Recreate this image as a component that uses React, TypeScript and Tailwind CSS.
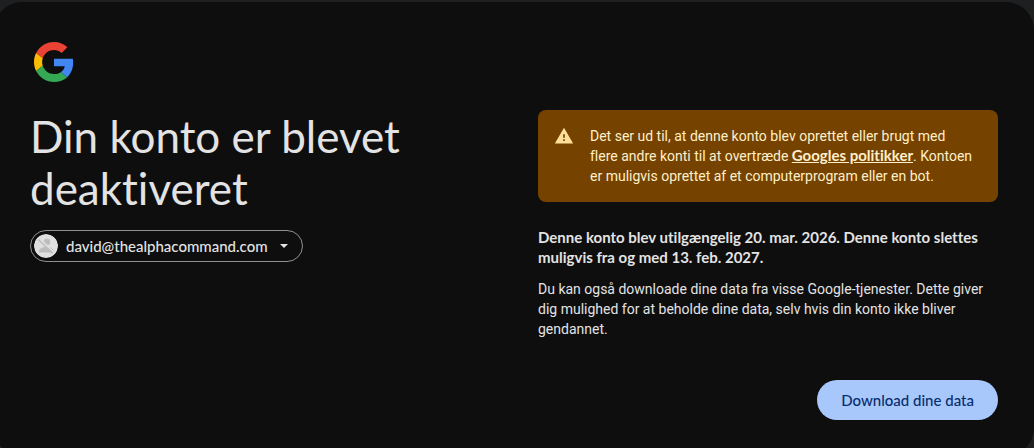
const GoogleLogo = () => (
  <svg viewBox="0 0 48 48" className="m-1 size-10" role="img" aria-label="Google">
    <path fill="#EA4335" d="M24 9.5c3.54 0 6.71 1.22 9.21 3.6l6.85-6.85C35.9 2.38 30.47 0 24 0 14.62 0 6.51 5.38 2.56 13.22l7.98 6.19C12.43 13.72 17.74 9.5 24 9.5z" />
    <path fill="#4285F4" d="M46.98 24.55c0-1.57-.15-3.09-.38-4.55H24v9.02h12.94c-.58 2.96-2.26 5.48-4.78 7.18l7.73 6c4.51-4.18 7.09-10.36 7.09-17.65z" />
    <path fill="#FBBC05" d="M10.53 28.59c-.48-1.45-.76-2.99-.76-4.59s.27-3.14.76-4.59l-7.98-6.19C.92 16.46 0 20.12 0 24c0 3.88.92 7.54 2.56 10.78l7.97-6.19z" />
    <path fill="#34A853" d="M24 48c6.48 0 11.93-2.13 15.89-5.81l-7.73-6c-2.15 1.45-4.92 2.3-8.16 2.3-6.26 0-11.57-4.22-13.47-9.91l-7.98 6.19C6.51 42.62 14.62 48 24 48z" />
  </svg>
);

const Avatar = () => (
  <svg viewBox="0 0 24 24" className="size-6 rounded-full" aria-hidden="true">
    <circle cx="12" cy="12" r="12" fill="#e0e0e0" />
    <circle cx="13" cy="8" r="3.3" fill="#bdbdbd" />
    <path d="M5 18.500v-1.500c0-2.500 3.500-4 7.500-4s7 1.500 7 4v1.500z" fill="#bdbdbd" />
    <path d="M6 4.500 20 18.500" stroke="#e0e0e0" strokeWidth="1.500" />
    <path d="M4.500 5.500 18.500 19.500" stroke="#bdbdbd" strokeWidth="1.500" />
  </svg>
);

const AccountButton = () => (
  <button
    type="button"
    className="mt-4 flex h-8 items-center rounded-full border border-[#8e918f] pr-3.5 pl-[3px] text-[15px] font-medium text-[#e3e3e3]"
  >
    <Avatar />
    <span className="ml-2">david@thealphacommand.com</span>
    <svg viewBox="0 0 8 4" className="ml-3 h-1 w-2" aria-hidden="true">
      <path d="M0 0h8L4 4z" fill="currentColor" />
    </svg>
  </button>
);

const Notice = () => (
  <div className="flex gap-4 rounded-lg bg-[#754200] p-4 text-[#ffdf99]">
    <svg viewBox="0 0 24 24" className="size-5 shrink-0" fill="currentColor" aria-hidden="true">
      <path d="M1 21h22L12 2 1 21zm12-3h-2v-2h2v2zm0-4h-2v-4h2v4z" />
    </svg>
    <p className="font-['Roboto',sans-serif] text-sm text-[#ffefc9]">
      Det ser ud til, at denne konto blev oprettet eller brugt med
      <br />
      flere andre konti til at overtræde{" "}
      <a href="#politikker" className="font-['Lato',sans-serif] text-[15px] leading-none font-bold underline">Googles politikker</a>. Kontoen
      <br />
      er muligvis oprettet af et computerprogram eller en bot.
    </p>
  </div>
);

const App = () => {
  return (
    <div className="h-screen overflow-hidden bg-[#1e1f20] pt-0.5 font-['Lato',sans-serif] text-[#e3e3e3] [font-variant-ligatures:none]">
      <main className="-ml-1.5 rounded-[28px] bg-[#0e0e0e] p-9">
        <GoogleLogo />
        <div className="mt-7 grid grid-cols-2 gap-12">
          <div>
            <h1 className="text-[44px] leading-[52px]">Din konto er blevet deaktiveret</h1>
            <AccountButton />
          </div>
          <div>
            <Notice />
            <p className="mt-[25px] text-[15px] leading-5 font-bold">
              Denne konto blev utilgængelig 20. mar. 2026. Denne konto slettes muligvis fra og med 13. feb. 2027.
            </p>
            <p className="mt-3 font-['Roboto',sans-serif] text-sm">
              Du kan også downloade dine data fra visse Google-tjenester. Dette giver dig mulighed for at beholde
              dine data, selv hvis din konto ikke bliver gendannet.
            </p>
          </div>
        </div>
        <div className="mt-[41px] flex justify-end">
          <button type="button" className="h-10 rounded-full bg-[#a8c7fa] px-6 text-[15px] font-medium text-[#062e6f]">
            Download dine data
          </button>
        </div>
      </main>
    </div>
  );
};

export default App;
